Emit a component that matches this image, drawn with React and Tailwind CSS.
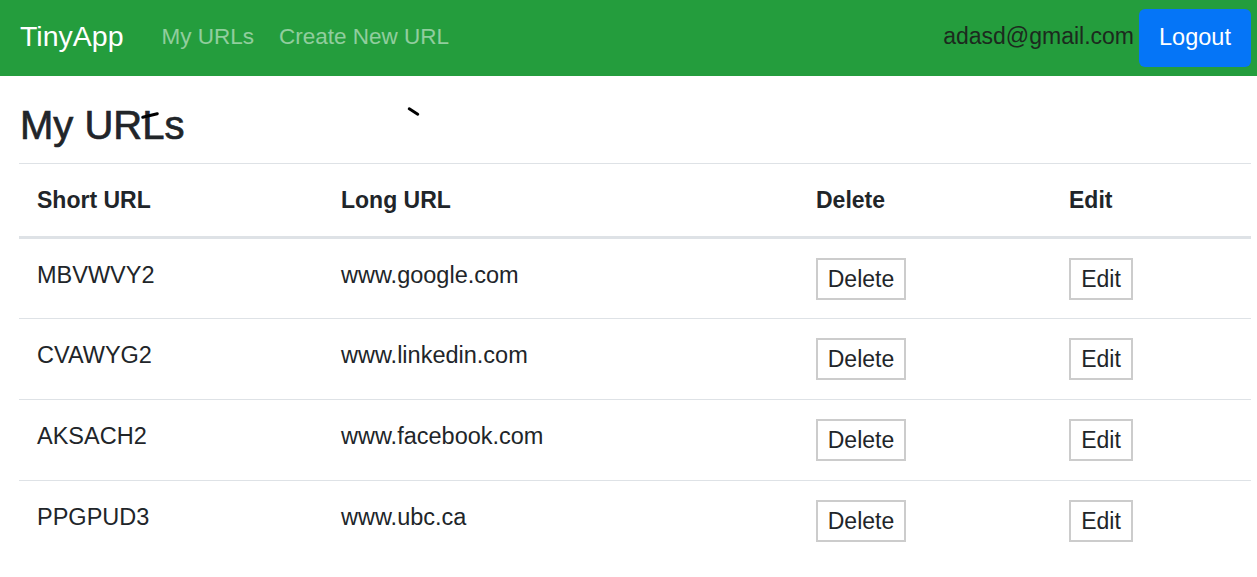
import React from 'react';

const urls = [
  { short: 'MBVWVY2', long: 'www.google.com' },
  { short: 'CVAWYG2', long: 'www.linkedin.com' },
  { short: 'AKSACH2', long: 'www.facebook.com' },
  { short: 'PPGPUD3', long: 'www.ubc.ca' },
];

function App() {
  return (
    <div className="min-h-screen bg-white text-[#212529] font-['Liberation_Sans',Arial,sans-serif]">
      {/* Navbar */}
      <nav className="h-[76px] bg-[#249d3d] flex items-center justify-between pl-5 pr-[6px]">
        <div className="flex items-center pb-[3px]">
          <a className="text-[28.5px] text-white mr-[38px]">TinyApp</a>
          <a className="text-[22.5px] text-white/50 mr-[25px]">My URLs</a>
          <a className="text-[22.5px] text-white/50">Create New URL</a>
        </div>
        <div className="flex items-center">
          <span className="text-[23px] text-[#1c2a1e] mr-[5px] pb-[3px]">adasd@gmail.com</span>
          <button className="w-[112px] h-[58px] bg-[#0575f7] rounded-[6px] text-white text-[23.5px]">Logout</button>
        </div>
      </nav>

      {/* Main */}
      <main className="px-[19px] pr-[6px] relative">
        <h1 className="text-[40px] leading-none pt-[29px] pb-[18px] pl-px [-webkit-text-stroke:0.7px_#212529]">My URLs</h1>
        <span className="absolute left-[141px] top-[38px] w-[18px] h-[3px] bg-black rotate-[-14deg] rounded-sm" />
        <span className="absolute left-[407px] top-[34px] w-[13px] h-[3px] bg-black rotate-[32deg] rounded-sm" />
        <table className="w-full table-fixed border-collapse text-[23.5px]">
          <colgroup>
            <col className="w-[304px]" />
            <col className="w-[475px]" />
            <col className="w-[253px]" />
            <col />
          </colgroup>
          <thead>
            <tr className="border-t border-[#dee2e6] border-b-[3px] border-b-[#dee2e6] h-[74px]">
              <th className="text-left font-bold text-[23px] px-[18px] align-middle">Short URL</th>
              <th className="text-left font-bold text-[23px] px-[18px] align-middle">Long URL</th>
              <th className="text-left font-bold text-[23px] px-[18px] align-middle">Delete</th>
              <th className="text-left font-bold text-[23px] px-[18px] align-middle">Edit</th>
            </tr>
          </thead>
          <tbody>
            {urls.map((u) => (
              <tr key={u.short} className="border-b border-[#dee2e6] last:border-b-0 h-[81px]">
                <td className="px-[18px] align-top pt-[22px] leading-[28px]">{u.short}</td>
                <td className="px-[18px] align-top pt-[22px] leading-[28px]">{u.long}</td>
                <td className="px-[18px] align-top pt-[19px]">
                  <button className="h-[42px] w-[90px] border-2 border-[#cccccc] bg-white text-[23px]">Delete</button>
                </td>
                <td className="px-[18px] align-top pt-[19px]">
                  <button className="h-[42px] w-[64px] border-2 border-[#cccccc] bg-white text-[23px]">Edit</button>
                </td>
              </tr>
            ))}
          </tbody>
        </table>
      </main>
    </div>
  );
}

export default App;
